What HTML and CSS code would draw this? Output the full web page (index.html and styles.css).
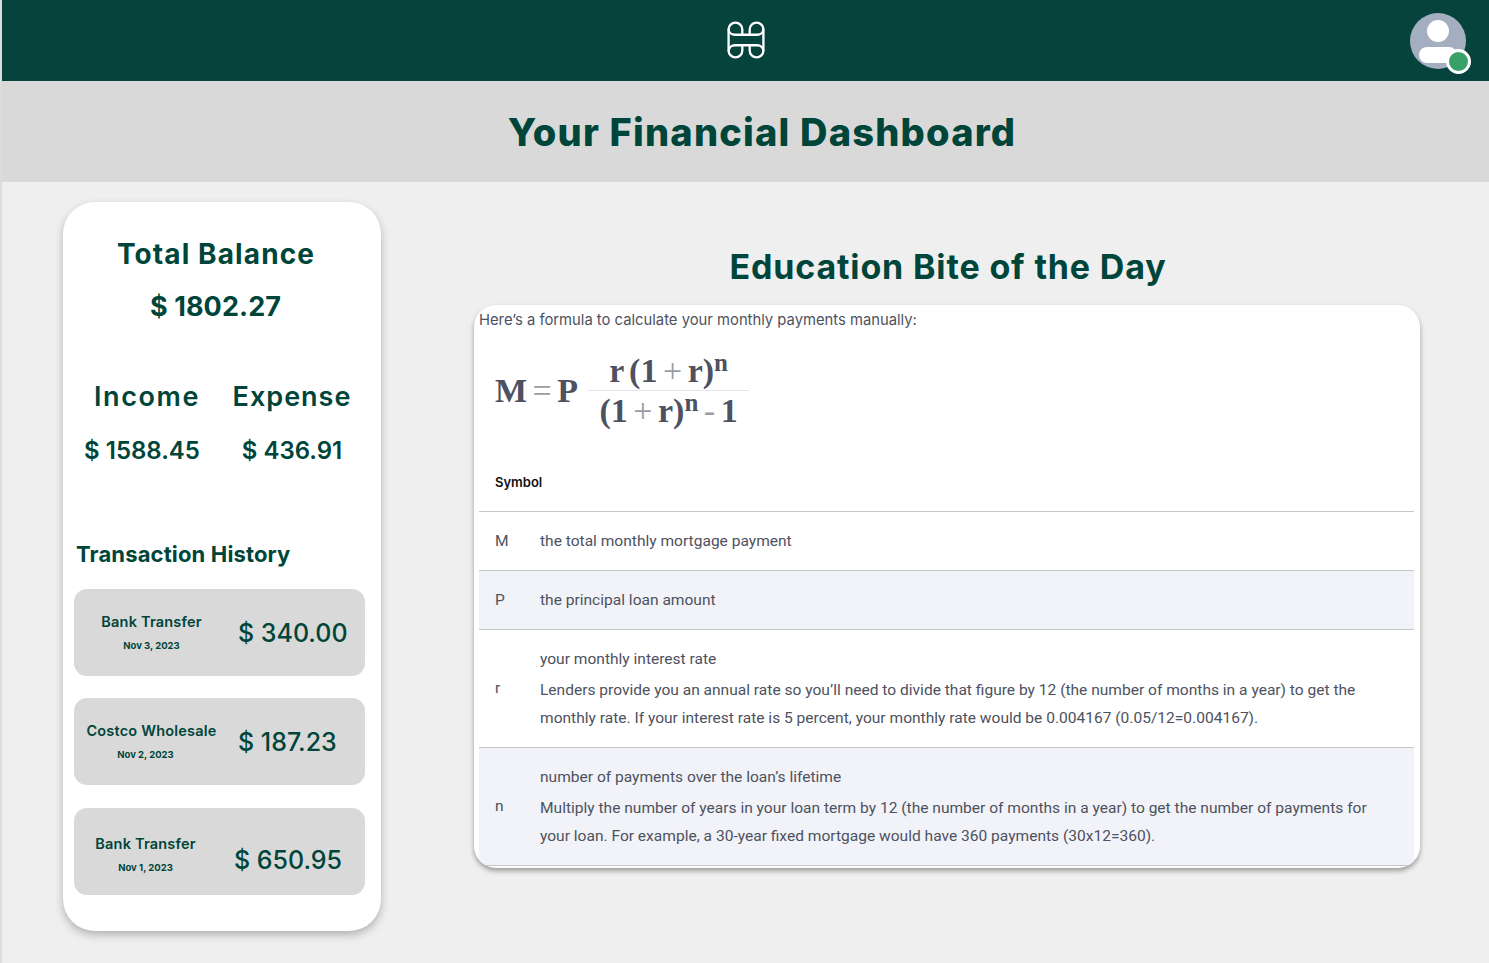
FILE: index.html
```html
<!DOCTYPE html>
<html>
<head>
    <link rel="stylesheet" href="styles.css">
</head>
<body>

    <header class="topbar">
        <svg class="logo" viewBox="0 0 36 36" width="38" height="38" fill="none" stroke="#fff" stroke-width="2.2">
            <path d="M1.5 8 V28"/>
            <path d="M1.5 8 a6.5 6.5 0 0 1 13 0 V13"/>
            <path d="M1.5 7 c0 4 3 6 6 6 H28.5 c3 0 6 -2 6 -6"/>
            <path d="M1.5 29 c0 -4 3 -6 6 -6 H28.5 c3 0 6 2 6 6"/>
            <path d="M1.5 28 a6.5 6.5 0 0 0 13 0 V23"/>
            <path d="M21.5 13 V8 a6.5 6.5 0 0 1 13 0 V28 a6.5 6.5 0 0 1 -13 0 V23"/>
        </svg>
        <div class="avatar">
            <svg viewBox="0 0 56 56" width="56" height="56">
                <circle cx="28" cy="28" r="28" fill="#a3aec0"/>
                <circle cx="28" cy="18" r="11" fill="#fff"/>
                <rect x="9" y="34" width="38" height="16" rx="8" fill="#fff"/>
            </svg>
            <span class="status"></span>
        </div>
    </header>

    <div class="titlebar">
        <h1>Your Financial Dashboard</h1>
    </div>

    <main class="content">
        <section class="summary">
            <h2 class="balance-label">Total Balance</h2>
            <div class="balance-value">$ 1802.27</div>

            <div class="totals">
                <div class="total-col">
                    <h3>Income</h3>
                    <div class="total-value">$ 1588.45</div>
                </div>
                <div class="total-col">
                    <h3>Expense</h3>
                    <div class="total-value">$ 436.91</div>
                </div>
            </div>

            <h3 class="history-title">Transaction History</h3>

            <div class="txn">
                <div class="txn-info">
                    <div class="txn-name">Bank Transfer</div>
                    <div class="txn-date">Nov 3, 2023</div>
                </div>
                <div class="txn-amount">$ 340.00</div>
            </div>
            <div class="txn">
                <div class="txn-info">
                    <div class="txn-name">Costco Wholesale</div>
                    <div class="txn-date txn-date-left">Nov 2, 2023</div>
                </div>
                <div class="txn-amount">$ 187.23</div>
            </div>
            <div class="txn txn-last">
                <div class="txn-info">
                    <div class="txn-name">Bank Transfer</div>
                    <div class="txn-date">Nov 1, 2023</div>
                </div>
                <div class="txn-amount">$ 650.95</div>
            </div>
        </section>

        <section class="education">
            <h2>Education Bite of the Day</h2>
            <div class="bite-card">
                <p class="intro">Here’s a formula to calculate your monthly payments manually:</p>

                <div class="formula">
                    <span class="formula-lhs">M <i>=</i> P</span>
                    <span class="fraction">
                        <span class="numerator">r (1 <i>+</i> r)<sup>n</sup></span>
                        <span class="denominator">(1 <i>+</i> r)<sup>n</sup> <i>-</i> 1</span>
                    </span>
                </div>

                <table class="symbols">
                    <thead>
                        <tr><th colspan="2">Symbol</th></tr>
                    </thead>
                    <tbody>
                        <tr>
                            <td class="sym">M</td>
                            <td>the total monthly mortgage payment</td>
                        </tr>
                        <tr class="shaded">
                            <td class="sym">P</td>
                            <td>the principal loan amount</td>
                        </tr>
                        <tr>
                            <td class="sym">r</td>
                            <td>
                                <p>your monthly interest rate</p>
                                <p>Lenders provide you an annual rate so you’ll need to divide that figure by 12 (the number of months in a year) to get the monthly rate. If your interest rate is 5 percent, your monthly rate would be 0.004167 (0.05/12=0.004167).</p>
                            </td>
                        </tr>
                        <tr class="shaded">
                            <td class="sym">n</td>
                            <td>
                                <p>number of payments over the loan’s lifetime</p>
                                <p>Multiply the number of years in your loan term by 12 (the number of months in a year) to get the number of payments for your loan. For example, a 30-year fixed mortgage would have 360 payments (30x12=360).</p>
                            </td>
                        </tr>
                    </tbody>
                </table>
            </div>
        </section>
    </main>

</body>
</html>
```

FILE: styles.css
```css
* {
    box-sizing: border-box;
}
body {
    margin: 0;
    height: 963px;
    overflow: hidden;
    font-family: Inter, "Open Sans", sans-serif;
    background-color: #efefef;
    color: #00453a;
    border-left: 2px solid #dcdcdc;
}
.topbar {
    height: 81px;
    background-color: #05433c;
    display: flex;
    align-items: center;
    justify-content: center;
    position: relative;
}
.logo {
    margin: 0 0 2px 1px;
}
.avatar {
    position: absolute;
    top: 13px;
    right: 23px;
    width: 56px;
    height: 56px;
}
.status {
    position: absolute;
    right: -5px;
    bottom: -5px;
    width: 25px;
    height: 25px;
    border-radius: 50%;
    background-color: #38a169;
    border: 3px solid #fff;
}
.titlebar {
    height: 101px;
    background-color: #d9d9d9;
    display: flex;
    align-items: center;
    justify-content: center;
}
h1 {
    margin: 0;
    padding-left: 33px;
    font-size: 38px;
    font-weight: 800;
    letter-spacing: 1.2px;
}
.content {
    display: flex;
    align-items: flex-start;
    padding: 20px 69px 0 61px;
}
.summary {
    width: 318px;
    height: 729px;
    flex-shrink: 0;
    background-color: #fff;
    border-radius: 32px;
    box-shadow: 0 4px 8px rgba(0, 0, 0, 0.25);
    padding: 35px 16px 0 11px;
}
.balance-label {
    margin: 0;
    padding-right: 7px;
    font-size: 28px;
    line-height: 34px;
    font-weight: 700;
    letter-spacing: 1.1px;
    text-align: center;
}
.balance-value {
    margin-top: 19px;
    padding-right: 8px;
    font-size: 27px;
    line-height: 34px;
    font-weight: 700;
    letter-spacing: 0.1px;
    text-align: center;
}
.totals {
    display: flex;
    margin-top: 56px;
}
.total-col {
    text-align: center;
}
.total-col:first-child {
    width: 136px;
    margin-right: 15px;
}
.total-col:last-child {
    width: 134px;
}
.total-col h3 {
    margin: 0;
    font-size: 27px;
    line-height: 34px;
    font-weight: 600;
    letter-spacing: 1px;
}
.total-col:first-child h3 {
    padding-left: 10px;
    letter-spacing: 1.6px;
}
.total-value {
    margin-top: 20px;
    font-size: 24px;
    line-height: 34px;
    font-weight: 600;
}
.history-title {
    margin: 72px 0 21px 2px;
    font-size: 22px;
    line-height: 28px;
    font-weight: 700;
    letter-spacing: 0.15px;
}
.txn {
    height: 87px;
    background-color: #d9d9d9;
    border-radius: 13px;
    margin-bottom: 22px;
    display: flex;
    align-items: center;
    justify-content: space-between;
    padding: 0 19px 0 12px;
}
.txn-last {
    margin-top: 23px;
    padding: 0 23px 0 6px;
}
.txn-last .txn-info {
    margin-top: 6px;
}
.txn-last .txn-amount {
    margin-top: 16px;
}
.txn-info {
    width: 131px;
    text-align: center;
}
.txn-name {
    font-size: 14.5px;
    line-height: 18px;
    font-weight: 600;
    letter-spacing: 0.2px;
    white-space: nowrap;
}
.txn-date {
    margin-top: 8px;
    font-size: 9.5px;
    line-height: 14px;
    font-weight: 700;
}
.txn-date-left {
    padding-right: 12px;
}
.txn-amount {
    width: 108px;
    font-size: 25px;
    line-height: 32px;
    font-weight: 500;
    white-space: nowrap;
}
.education {
    flex: 1;
    margin-left: 93px;
}
.education h2 {
    margin: 44px 0 18px;
    padding-left: 2px;
    font-size: 34px;
    line-height: 41px;
    font-weight: 700;
    letter-spacing: 0.85px;
    text-align: center;
}
.bite-card {
    height: 563px;
    background-color: #fff;
    border-radius: 22px;
    box-shadow: 0 3px 5px rgba(0, 0, 0, 0.35);
    padding: 5px 6px 0 5px;
    color: #4d5160;
    overflow: hidden;
}
.intro {
    margin: 0;
    font-size: 14.8px;
    line-height: 20px;
}
.formula {
    display: flex;
    align-items: center;
    height: 122px;
    padding: 0 0 0 16px;
    font-family: "Liberation Serif", serif;
    font-weight: 700;
    font-size: 34px;
    word-spacing: -3px;
    white-space: nowrap;
}
.formula i {
    font-style: normal;
    font-weight: 400;
    color: #9a9da8;
}
.formula-lhs {
    margin-right: 10px;
}
.fraction {
    display: flex;
    flex-direction: column;
    align-items: center;
    width: 161px;
}
.numerator {
    height: 40px;
    line-height: 40px;
    width: 100%;
    text-align: center;
    border-bottom: 1px solid #e3e4e8;
}
.denominator {
    height: 40px;
    line-height: 40px;
}
.formula sup {
    font-size: 25px;
    line-height: 0;
    vertical-align: 11px;
}
.symbols {
    width: 100%;
    border-collapse: collapse;
    font-family: Roboto, sans-serif;
    font-size: 15.55px;
    color: #4d5160;
}
.symbols th {
    height: 59px;
    padding: 2px 16px 0;
    text-align: left;
    font-family: Inter, sans-serif;
    font-size: 13px;
    font-weight: 600;
    color: #111;
    border-bottom: 1px solid #c4c7cc;
}
.symbols td {
    height: 59px;
    padding: 15px 45px 15px 0;
    border-bottom: 1px solid #c4c7cc;
    line-height: 28px;
}
.symbols td.sym {
    width: 61px;
    padding: 0 0 0 16px;
}
.symbols p {
    margin: 0;
}
.symbols p:first-child {
    margin-bottom: 3px;
}
.shaded {
    background-color: #f2f3f8;
}
```
